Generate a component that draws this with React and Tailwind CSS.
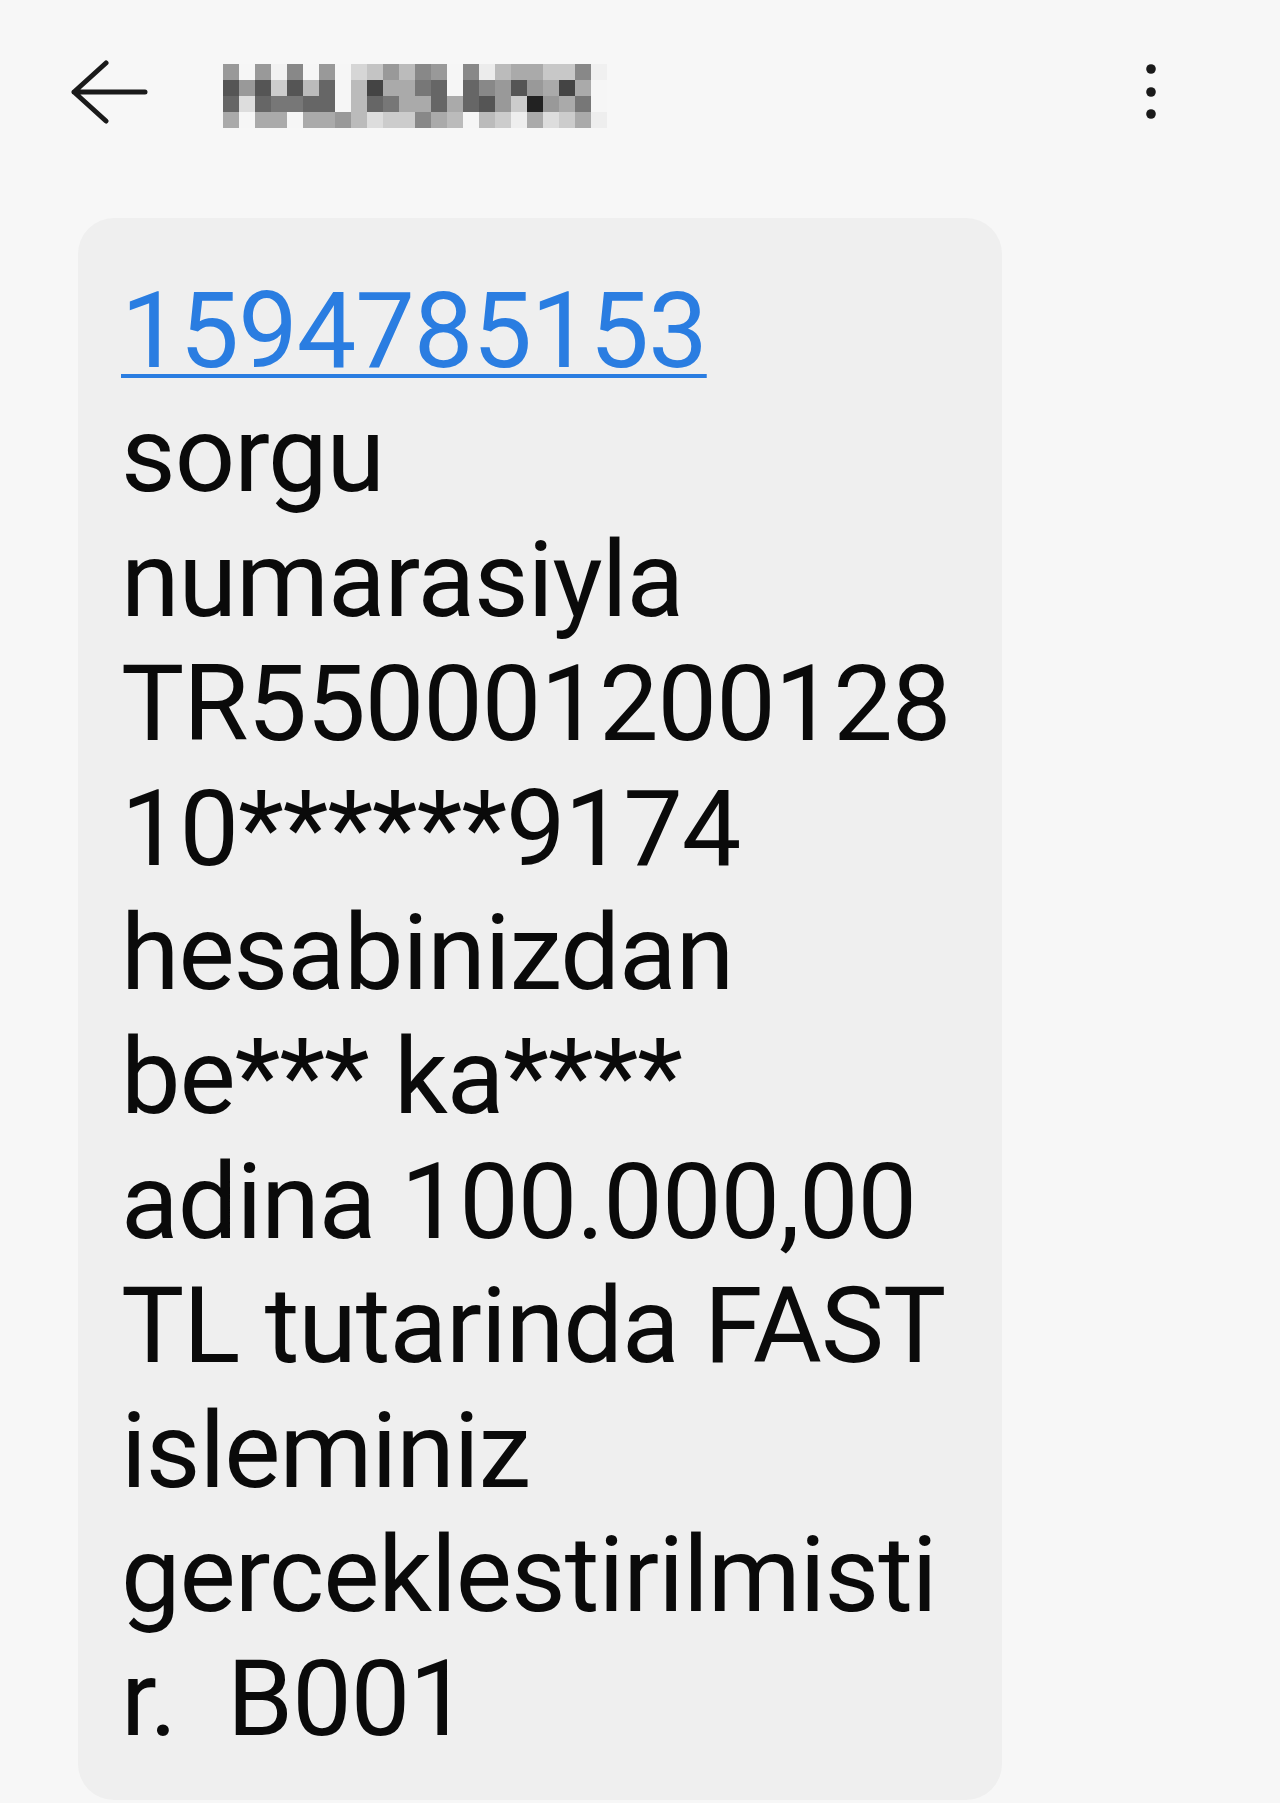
import React from "react";

const pixels = [
  ["#999", "#f6f6f6", "#999", "#f2f2f2", "#888", "#f6f6f6", "#999", "#f6f6f6", "#d6d6d6", "#c4c4c4", "#999", "#bbb", "#888", "#999", "#f6f6f6", "#888", "#ececec", "#bbb", "#aaa", "#aaa", "#c8c8c8", "#c8c8c8", "#888", "#f0f0f0"],
  ["#555", "#999", "#555", "#ccc", "#555", "#bbb", "#666", "#f6f6f6", "#bbb", "#444", "#aaa", "#aaa", "#777", "#666", "#f6f6f6", "#666", "#888", "#999", "#555", "#999", "#aaa", "#444", "#aaa", "#f6f6f6"],
  ["#666", "#ddd", "#666", "#777", "#777", "#666", "#666", "#f6f6f6", "#bbb", "#666", "#777", "#aaa", "#aaa", "#666", "#aaa", "#666", "#555", "#999", "#ccc", "#222", "#999", "#aaa", "#777", "#f6f6f6"],
  ["#aaa", "#f6f6f6", "#aaa", "#aaa", "#f6f6f6", "#aaa", "#aaa", "#999", "#bbb", "#ddd", "#ccc", "#ccc", "#888", "#aaa", "#bbb", "#f6f6f6", "#bbb", "#ccc", "#eee", "#aaa", "#ddd", "#ccc", "#aaa", "#eee"],
];

const lines = [
  "sorgu",
  "numarasiyla",
  "TR550001200128",
  "10******9174",
  "hesabinizdan",
  "be*** ka****",
  "adina 100.000,00",
  "TL tutarinda FAST",
  "isleminiz",
  "gerceklestirilmisti",
  "r.  B001",
];

function BackArrow() {
  return (
    <svg width="80" height="64" viewBox="0 0 80 64" fill="none">
      <path
        d="M4 32H75M36 3L4 32L36 61"
        stroke="#1a1a1a"
        strokeWidth="5"
        strokeLinecap="round"
        strokeLinejoin="round"
      />
    </svg>
  );
}

function BlurredTitle() {
  return (
    <svg width="384" height="64" viewBox="0 0 384 64">
      {pixels.map((row, r) =>
        row.map((c, i) => (
          <rect key={`${r}-${i}`} x={i * 16} y={r * 16} width="16" height="16" fill={c} />
        ))
      )}
    </svg>
  );
}

function MoreDots() {
  return (
    <svg width="20" height="64" viewBox="0 0 20 64">
      <circle cx="10" cy="9" r="4.8" fill="#1a1a1a" />
      <circle cx="10" cy="32" r="4.8" fill="#1a1a1a" />
      <circle cx="10" cy="54" r="4.8" fill="#1a1a1a" />
    </svg>
  );
}

export default function App() {
  return (
    <div className="min-h-[1803px] w-[1280px] bg-[#f7f7f7] font-['Roboto',sans-serif]">
      {/* header */}
      <div className="flex h-[184px] items-center pl-[70px] pr-[119px]">
        <BackArrow />
        <div className="ml-[73px] mt-[8px]">
          <BlurredTitle />
        </div>
        <div className="ml-auto">
          <MoreDots />
        </div>
      </div>

      {/* message bubble */}
      <div className="ml-[78px] mt-[34px] w-[924px] rounded-[36px] bg-[#efefef] pb-[38px] pl-[43px] pt-[51px] text-[106px] leading-[124.4px] tracking-[-1px] text-[#0a0a0a]">
        <a className="block whitespace-nowrap text-[#2a7de1] underline decoration-[4px] underline-offset-[7px]">
          1594785153
        </a>
        {lines.map((line) => (
          <div key={line} className="whitespace-pre">
            {line}
          </div>
        ))}
      </div>
    </div>
  );
}
